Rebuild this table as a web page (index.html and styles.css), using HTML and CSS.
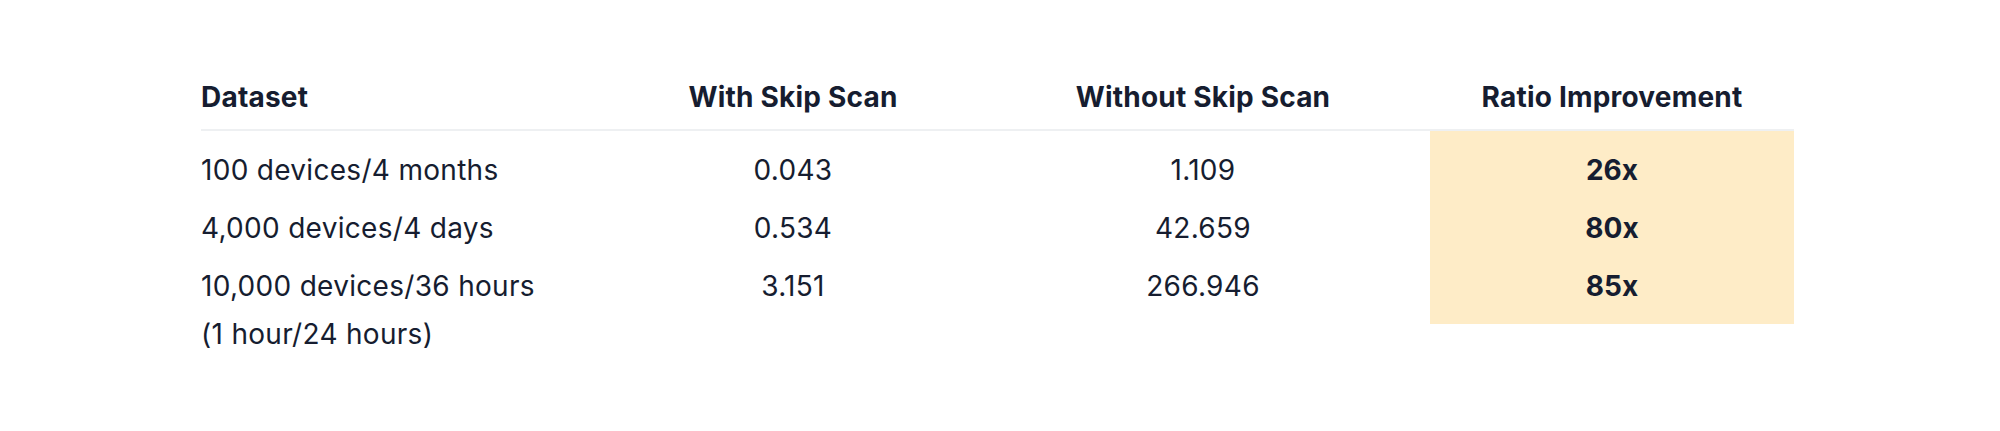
FILE: index.html
```html
<!DOCTYPE html>
<html lang="en">
<head>
<meta charset="utf-8">
<title>Skip Scan results</title>
<link rel="stylesheet" href="styles.css">
</head>
<body>
<main class="page">
  <div class="results" role="table">
    <div class="head left" role="columnheader">Dataset</div>
    <div class="head" role="columnheader">With Skip Scan</div>
    <div class="head" role="columnheader">Without Skip Scan</div>
    <div class="head" role="columnheader">Ratio Improvement</div>

    <div class="cell left first">100 devices/4 months</div>
    <div class="cell first">0.043</div>
    <div class="cell first">1.109</div>
    <div class="cell ratio first">26x</div>

    <div class="cell left">4,000 devices/4 days</div>
    <div class="cell">0.534</div>
    <div class="cell">42.659</div>
    <div class="cell ratio">80x</div>

    <div class="cell left">10,000 devices/36 hours<br>(1 hour/24 hours)</div>
    <div class="cell">3.151</div>
    <div class="cell">266.946</div>
    <div class="cell ratio last">85x</div>
  </div>
</main>
</body>
</html>
```

FILE: styles.css
```css
html, body {
  margin: 0;
  padding: 0;
  background: #ffffff;
}

body {
  font-family: Inter, "Noto Sans", "Liberation Sans", sans-serif;
  color: #161d30;
}

.page {
  padding: 77px 0 60px 201px;
}

.results {
  display: grid;
  width: 1593px;
  grid-template-columns: 409px 366px 454px 364px;
  grid-template-rows: auto 68px 58px auto;
  letter-spacing: 0.3px;
}

.head {
  font-size: 28px;
  font-weight: 700;
  line-height: 40px;
  padding-bottom: 12px;
  text-align: center;
  border-bottom: 2px solid #eef0f2;
  letter-spacing: 0.2px;
}

.cell {
  box-sizing: border-box;
  font-size: 28px;
  font-weight: 400;
  line-height: 48px;
  padding-top: 5px;
  text-align: center;
  white-space: nowrap;
}

.cell.first {
  padding-top: 15px;
}

.left {
  text-align: left;
}

.ratio {
  background: #feecc7;
  font-weight: 700;
  letter-spacing: 0;
}

.ratio.last {
  align-self: start;
  height: 67px;
}
```
